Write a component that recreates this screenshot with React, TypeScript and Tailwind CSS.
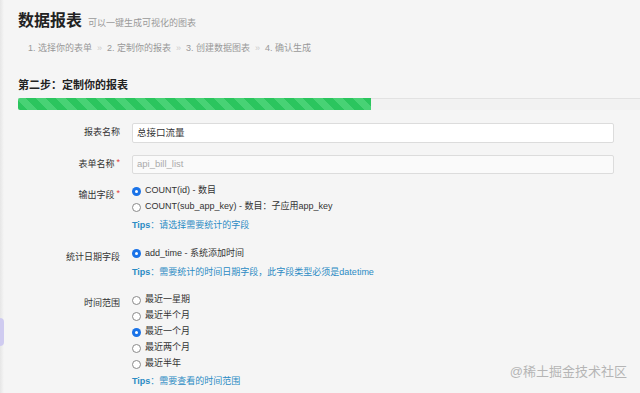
import React from "react";

const FONT = { fontFamily: '"Liberation Sans", "Noto Sans CJK SC", sans-serif' };

function Radio({ checked, label }: { checked?: boolean; label: string }) {
  return (
    <div className="flex h-[16px] items-center gap-[4px] text-[9px] text-[#333]">
      {checked ? (
        <span className="flex h-[9px] w-[9px] items-center justify-center rounded-full bg-[#1a73e8]">
          <span className="h-[3px] w-[3px] rounded-full bg-white" />
        </span>
      ) : (
        <span className="h-[9px] w-[9px] rounded-full border border-[#8a8a8a] bg-white" />
      )}
      <span>{label}</span>
    </div>
  );
}

function Tips({ text }: { text: string }) {
  return (
    <p className="text-[9px] text-[#2b8bc4]">
      <span className="font-bold">Tips</span>：{text}
    </p>
  );
}

function Row({ label, required, children, labelPt = "pt-0" }: { label: string; required?: boolean; children: React.ReactNode; labelPt?: string }) {
  return (
    <div className="flex">
      <div className={`w-[120px] shrink-0 text-right text-[9px] text-[#333] ${labelPt}`}>
        {label}
        {required && <span className="relative -top-[2px] ml-[2px] text-[9px] text-[#e23b3b]">*</span>}
      </div>
      <div className="ml-[12px] flex-1">{children}</div>
    </div>
  );
}

export default function App() {
  return (
    <div className="relative h-[393px] w-[640px] overflow-hidden bg-[#f5f5f5]" style={FONT}>
      <div className="pointer-events-none absolute left-0 top-0 h-full w-[4px] bg-gradient-to-r from-[#e6e6e6] to-transparent" />
      <div className="pointer-events-none absolute left-0 top-[318px] h-[28px] w-[4px] rounded-r-full bg-[#cfcbf0]" />

      <div className="pl-[18px] pt-[9px]">
        <div className="flex items-baseline gap-[6px]">
          <h1 className="text-[16px] font-bold text-[#222]">数据报表</h1>
          <span className="text-[9px] text-[#999]">可以一键生成可视化的图表</span>
        </div>
        <div className="mt-[9px] flex items-center gap-[5px] pl-[10px] text-[9px] text-[#999]">
          <span>1. 选择你的表单</span>
          <span className="text-[#ccc]">»</span>
          <span>2. 定制你的报表</span>
          <span className="text-[#ccc]">»</span>
          <span>3. 创建数据图表</span>
          <span className="text-[#ccc]">»</span>
          <span>4. 确认生成</span>
        </div>
        <h2 className="mt-[21px] text-[11px] font-bold text-[#222]">第二步：定制你的报表</h2>
        <div className="mt-[5px] h-[12px] border-t border-[#e2e2e2] bg-[#f2f2f2]">
          <div className="-mt-px h-[12px] w-[353px] rounded-l-[2px] bg-[repeating-linear-gradient(45deg,#2bc55e_0,#2bc55e_7px,#48d275_7px,#48d275_14px)]" />
        </div>
      </div>

      <div className="mt-[13px] flex w-[614px] flex-col">
        <Row label="报表名称" labelPt="pt-[3px]">
          <div className="flex h-[20px] items-center rounded-[2px] border border-[#dcdcdc] bg-white px-[4px] text-[9.5px] text-[#333]">
            总接口流量
          </div>
        </Row>
        <div className="h-[12px]" />
        <Row label="表单名称" required labelPt="pt-[3px]">
          <div className="flex h-[19px] items-center rounded-[2px] border border-[#dcdcdc] bg-[#fafafa] px-[4px] text-[9.5px] text-[#aaa]">
            api_bill_list
          </div>
        </Row>
        <div className="h-[9px]" />
        <Row label="输出字段" required labelPt="pt-[6px]">
          <Radio checked label="COUNT(id) - 数目" />
          <Radio label="COUNT(sub_app_key) - 数目：子应用app_key" />
          <div className="mt-[4px]">
            <Tips text="请选择需要统计的字段" />
          </div>
        </Row>
        <div className="h-[13px]" />
        <Row label="统计日期字段" labelPt="pt-[5px]">
          <Radio checked label="add_time - 系统添加时间" />
          <div className="mt-[4px]">
            <Tips text="需要统计的时间日期字段，此字段类型必须是datetime" />
          </div>
        </Row>
        <div className="h-[13px]" />
        <Row label="时间范围" labelPt="pt-[5px]">
          <Radio label="最近一星期" />
          <Radio label="最近半个月" />
          <Radio checked label="最近一个月" />
          <Radio label="最近两个月" />
          <Radio label="最近半年" />
          <div className="mt-[3px]">
            <Tips text="需要查看的时间范围" />
          </div>
        </Row>
      </div>

      <div className="absolute bottom-[12px] right-[13px] text-[13px] text-[#b5b5b5]">@稀土掘金技术社区</div>
    </div>
  );
}
